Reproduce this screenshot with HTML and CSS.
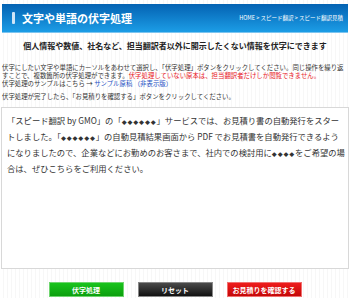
FILE: index.html
```html
<!DOCTYPE html>
<html lang="ja">
<head>
  <meta charset="UTF-8" />
  <meta name="viewport" content="width=device-width, initial-scale=1.0" />
  <title>文字や単語の伏字処理</title>
  <link rel="stylesheet" href="styles.css">
</head>
<body>
  <div class="page">
    <div class="title-bar">
      <h1><span class="title-mark"></span>文字や単語の伏字処理</h1>
      <div class="breadcrumb">HOME &gt; スピード翻訳 &gt; スピード翻訳見積</div>
    </div>

    <h2 class="lead">個人情報や数値、社名など、担当翻訳者以外に開示したくない情報を伏字にできます</h2>

    <div class="notes">
      <p>伏字にしたい文字や単語にカーソルをあわせて選択し、「伏字処理」ボタンをクリックしてください。同じ操作を繰り返すことで、複数箇所の伏字処理ができます。<span class="warn">伏字処理していない原本は、担当翻訳者だけしか閲覧できません。</span><br>伏字処理のサンプルはこちら → <a href="#">サンプル原稿</a> <a href="#">（非表示版）</a></p>
      <p class="gap">伏字処理が完了したら、「お見積りを確認する」ボタンをクリックしてください。</p>
    </div>

    <div class="source-box">「スピード翻訳 by GMO」の「<span class="mask">◆◆◆◆◆◆</span>」サービスでは、お見積り書の自動発行をスター<br>トしました。「<span class="mask">◆◆◆◆◆◆</span>」の自動見積結果画面から PDF でお見積書を自動発行できるよう<br>になりましたので、企業などにお勤めのお客さまで、社内での検討用に<span class="mask">◆◆◆◆</span>をご希望の場<br>合は、ぜひこちらをご利用ください。</div>

    <div class="actions">
      <button class="btn btn-green">伏字処理</button>
      <button class="btn btn-black">リセット</button>
      <button class="btn btn-red">お見積りを確認する</button>
    </div>
  </div>
</body>
</html>
```

FILE: styles.css
```css
body {
  margin: 0;
  font-family: "Noto Sans CJK JP", "Noto Sans", sans-serif;
  color: #333;
  background-color: #fff;
  background-image: repeating-linear-gradient(90deg, transparent 0, transparent 3px, #f7f7f7 3px, #f7f7f7 4px);
}
.page {
  padding: 4px 2px 0;
}
.title-bar {
  height: 28px;
  display: flex;
  align-items: center;
  justify-content: space-between;
  background: linear-gradient(#0462b2, #1c9de6);
  border-bottom: 1px solid #7cc4ef;
}
.title-bar h1 {
  margin: 0;
  display: flex;
  align-items: center;
  font-size: 11px;
  font-weight: bold;
  color: #fff;
}
.title-mark {
  display: inline-block;
  width: 3px;
  height: 12px;
  margin: 0 7px 0 10px;
  background-color: #cfe5f7;
  border-radius: 1px;
}
.breadcrumb {
  padding-right: 5px;
  font-size: 5.5px;
  color: #fff;
}
.lead {
  margin: 7px 0 0;
  text-align: center;
  font-size: 8px;
  font-weight: bold;
  line-height: 12px;
  color: #222;
}
.notes {
  margin-top: 12px;
  font-size: 6.4px;
  line-height: 8px;
  color: #333;
}
.notes p {
  margin: 0;
}
.notes .gap {
  margin-top: 5px;
}
.notes .warn {
  color: #e8141c;
}
.notes a {
  color: #1a4fc4;
  text-decoration: none;
}
.source-box {
  margin: 6px -1px 0;
  height: 148px;
  padding: 5px 4px 7px 5px;
  border: 1px solid #d8d8d8;
  background-color: #fff;
  font-size: 8.3px;
  line-height: 14px;
  white-space: nowrap;
  overflow: hidden;
  color: #333;
}
.mask {
  font-size: 5px;
  letter-spacing: 0.8px;
}
.actions {
  display: flex;
  justify-content: center;
  gap: 14px;
  margin-top: 13px;
}
.btn {
  width: 75px;
  height: 15px;
  padding: 0;
  border: 1px solid #999;
  font-family: "Noto Sans CJK JP", sans-serif;
  font-size: 7px;
  font-weight: bold;
  color: #fff;
  cursor: pointer;
}
.btn-green {
  background: linear-gradient(#19c41c, #0c9f0e);
  border-color: #6fd56f;
}
.btn-black {
  background: linear-gradient(#4a4a4a, #111);
  border-color: #888;
}
.btn-red {
  background: linear-gradient(#ee1c1c, #c40808);
  border-color: #f07070;
}
```
